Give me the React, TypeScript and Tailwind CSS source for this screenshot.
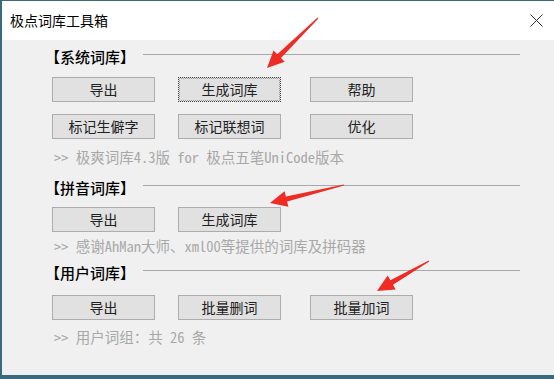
import React from 'react';

const sans = { fontFamily: '"Noto Sans CJK SC", "Noto Sans", sans-serif' };
const mono = { fontFamily: '"Noto Sans Mono CJK SC", "Noto Sans CJK SC", monospace' };

type Pt = [number, number];

// red annotation arrows drawn over the dialog
const arrows: { tail: Pt; tip: Pt }[] = [
  { tail: [318, 18], tip: [267, 68] },
  { tail: [344, 185], tip: [270, 203] },
  { tail: [429, 261], tip: [377, 291] },
];

function arrowPoints(tail: Pt, tip: Pt) {
  const dx = tip[0] - tail[0];
  const dy = tip[1] - tail[1];
  const len = Math.hypot(dx, dy);
  const ux = dx / len;
  const uy = dy / len;
  const nx = -uy;
  const ny = ux;
  const head = 17;
  const hw = 8;
  const sw = 2.6;
  const tw = 0.6;
  const bx = tip[0] - ux * head;
  const by = tip[1] - uy * head;
  const pts: Pt[] = [
    [tail[0] + nx * tw, tail[1] + ny * tw],
    [bx + nx * sw, by + ny * sw],
    [bx + nx * hw, by + ny * hw],
    tip,
    [bx - nx * hw, by - ny * hw],
    [bx - nx * sw, by - ny * sw],
    [tail[0] - nx * tw, tail[1] - ny * tw],
  ];
  return pts.map((p) => `${p[0].toFixed(1)},${p[1].toFixed(1)}`).join(' ');
}

function Btn({ label, focused }: { label: string; focused?: boolean }) {
  return (
    <button
      className={
        focused
          ? 'relative flex h-[25px] w-[103px] items-center justify-center border border-dotted border-[#444] bg-[#e1e1e1] text-[14px] leading-none text-[#222]'
          : 'relative flex h-[25px] w-[103px] items-center justify-center border border-[#adadad] bg-[#e1e1e1] text-[14px] leading-none text-[#222]'
      }
      style={sans}
    >
      {focused && <span className="pointer-events-none absolute inset-0 border border-dotted border-[#999]" />}
      <span className="-mt-px">{label}</span>
    </button>
  );
}

function Header({ title }: { title: string }) {
  return (
    <div className="flex h-[20px] items-center">
      <span className="text-[15px] font-medium leading-[20px] text-black" style={sans}>
        【{title}】
      </span>
      <div className="mb-[6px] ml-[8px] h-px flex-1 bg-[#a8a8a8]" />
    </div>
  );
}

function Info({ text }: { text: string }) {
  return (
    <div className="ml-[9px] h-[20px] whitespace-nowrap text-[14.5px] leading-[20px] text-[#a8a8a8]" style={mono}>
      {text}
    </div>
  );
}

export default function App() {
  return (
    <div className="relative h-[379px] w-[554px] overflow-hidden bg-[#f0f0f0]">
      <div className="flex h-full w-full flex-col border-b-4 border-l-2 border-t border-[#3a6a80]">
        <div className="flex h-[39px] items-center justify-between bg-white pl-[8px] pr-[11px]">
          <span className="text-[14px] text-black" style={sans}>
            极点词库工具箱
          </span>
          <svg width="13" height="13" viewBox="0 0 13 13">
            <path d="M0.5 0.5 L12.5 12.5 M12.5 0.5 L0.5 12.5" stroke="#333" strokeWidth="1" />
          </svg>
        </div>

        <div className="flex flex-1 flex-col pl-[43px] pr-[34px] pt-[7px]">
          <Header title="系统词库" />
          <div className="ml-[7px] mt-[10px] flex flex-col gap-[12px]">
            <div className="flex gap-[23px]">
              <Btn label="导出" />
              <div className="mr-[6px]">
                <Btn label="生成词库" focused />
              </div>
              <Btn label="帮助" />
            </div>
            <div className="flex gap-[23px]">
              <Btn label="标记生僻字" />
              <div className="mr-[6px]">
                <Btn label="标记联想词" />
              </div>
              <Btn label="优化" />
            </div>
          </div>
          <div className="mt-[8px]">
            <Info text=">> 极爽词库4.3版 for 极点五笔UniCode版本" />
          </div>

          <div className="mt-[11px]">
            <Header title="拼音词库" />
          </div>
          <div className="ml-[7px] mt-[9px] flex gap-[23px]">
            <Btn label="导出" />
            <Btn label="生成词库" />
          </div>
          <div className="mt-[4px]">
            <Info text=">> 感谢AhMan大师、xml00等提供的词库及拼码器" />
          </div>

          <div className="mt-[7px]">
            <Header title="用户词库" />
          </div>
          <div className="ml-[7px] mt-[12px] flex gap-[23px]">
            <Btn label="导出" />
            <div className="mr-[6px]">
              <Btn label="批量删词" />
            </div>
            <Btn label="批量加词" />
          </div>
          <div className="mt-[7px]">
            <Info text=">> 用户词组：共 26 条" />
          </div>
        </div>
      </div>

      <svg className="pointer-events-none absolute inset-0" width="554" height="379">
        {arrows.map((a, i) => (
          <polygon key={i} points={arrowPoints(a.tail, a.tip)} fill="#ee2b24" />
        ))}
      </svg>
    </div>
  );
}
